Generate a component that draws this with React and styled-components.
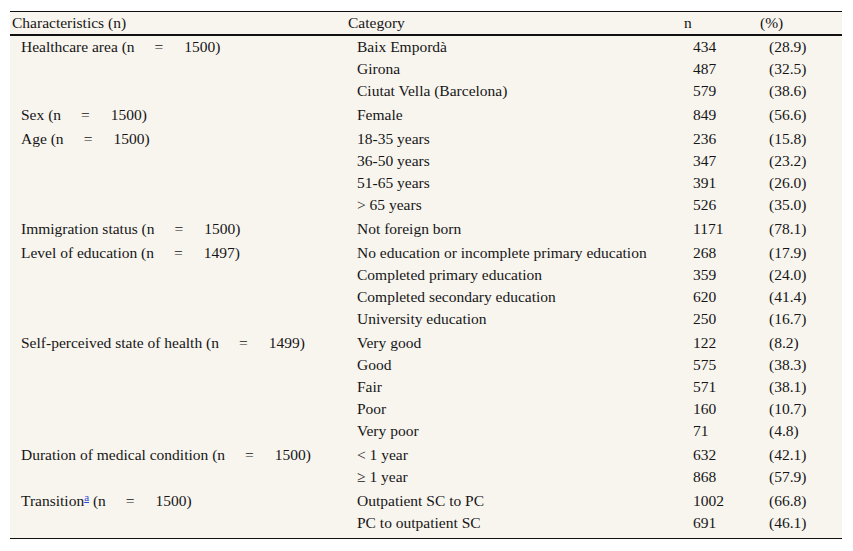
import React from "react";
import styled, { createGlobalStyle } from "styled-components";

const Global = createGlobalStyle`
  html, body { margin: 0; padding: 0; background: #ffffff; }
  body { font-family: "Liberation Serif", "Times New Roman", serif; color: #161616; }
`;

const Wrapper = styled.div`
  padding: 11px 11px 0 10px;
`;

const Table = styled.table`
  width: 832px;
  table-layout: fixed;
  border-collapse: separate;
  border-spacing: 0;
  background: #f8f5ef;
  font-size: 15.5px;
  line-height: 22px;
`;

const HeadCell = styled.th`
  text-align: left;
  font-weight: normal;
  padding: 0 0 0 2px;
  height: 22px;
  border-top: 1px solid #111;
  border-bottom: 2px solid #111;
  white-space: nowrap;
`;

const Cell = styled.td`
  padding: 0 0 ${(p) => (p.$last ? "4px" : p.$groupEnd ? "2px" : "0")} 11px;
  vertical-align: top;
  white-space: nowrap;
  border-bottom: ${(p) => (p.$last ? "1px solid #111" : "none")};
`;

const Eq = styled.span`
  margin: 0 21px 0 20px;
`;

const Sup = styled.a`
  font-size: 11px;
  vertical-align: 5px;
  line-height: 0;
  color: #2b48d8;
  text-decoration: underline;
`;

const groups = [
  {
    label: "Healthcare area",
    n: 1500,
    rows: [
      ["Baix Empordà", 434, "(28.9)"],
      ["Girona", 487, "(32.5)"],
      ["Ciutat Vella (Barcelona)", 579, "(38.6)"],
    ],
  },
  { label: "Sex", n: 1500, rows: [["Female", 849, "(56.6)"]] },
  {
    label: "Age",
    n: 1500,
    rows: [
      ["18-35 years", 236, "(15.8)"],
      ["36-50 years", 347, "(23.2)"],
      ["51-65 years", 391, "(26.0)"],
      ["> 65 years", 526, "(35.0)"],
    ],
  },
  { label: "Immigration status", n: 1500, rows: [["Not foreign born", 1171, "(78.1)"]] },
  {
    label: "Level of education",
    n: 1497,
    rows: [
      ["No education or incomplete primary education", 268, "(17.9)"],
      ["Completed primary education", 359, "(24.0)"],
      ["Completed secondary education", 620, "(41.4)"],
      ["University education", 250, "(16.7)"],
    ],
  },
  {
    label: "Self-perceived state of health",
    n: 1499,
    rows: [
      ["Very good", 122, "(8.2)"],
      ["Good", 575, "(38.3)"],
      ["Fair", 571, "(38.1)"],
      ["Poor", 160, "(10.7)"],
      ["Very poor", 71, "(4.8)"],
    ],
  },
  {
    label: "Duration of medical condition",
    n: 1500,
    rows: [
      ["< 1 year", 632, "(42.1)"],
      ["≥ 1 year", 868, "(57.9)"],
    ],
  },
  {
    label: "Transition",
    sup: "a",
    n: 1500,
    rows: [
      ["Outpatient SC to PC", 1002, "(66.8)"],
      ["PC to outpatient SC", 691, "(46.1)"],
    ],
  },
];

function Label({ g }) {
  return (
    <>
      {g.label}
      {g.sup ? <Sup href="#">{g.sup}</Sup> : null} (n<Eq>=</Eq>
      {g.n})
    </>
  );
}

export default function App() {
  return (
    <Wrapper>
      <Global />
      <Table>
        <colgroup>
          <col style={{ width: 336 }} />
          <col style={{ width: 336 }} />
          <col style={{ width: 76 }} />
          <col style={{ width: 84 }} />
        </colgroup>
        <thead>
          <tr>
            <HeadCell>Characteristics (n)</HeadCell>
            <HeadCell>Category</HeadCell>
            <HeadCell>n</HeadCell>
            <HeadCell>(%)</HeadCell>
          </tr>
        </thead>
        <tbody>
          {groups.map((g, gi) =>
            g.rows.map((r, ri) => {
              const groupEnd = ri === g.rows.length - 1;
              const last = groupEnd && gi === groups.length - 1;
              return (
                <tr key={`${gi}-${ri}`}>
                  <Cell $groupEnd={groupEnd} $last={last}>
                    {ri === 0 ? <Label g={g} /> : null}
                  </Cell>
                  <Cell $groupEnd={groupEnd} $last={last}>{r[0]}</Cell>
                  <Cell $groupEnd={groupEnd} $last={last}>{r[1]}</Cell>
                  <Cell $groupEnd={groupEnd} $last={last}>{r[2]}</Cell>
                </tr>
              );
            })
          )}
        </tbody>
      </Table>
    </Wrapper>
  );
}
